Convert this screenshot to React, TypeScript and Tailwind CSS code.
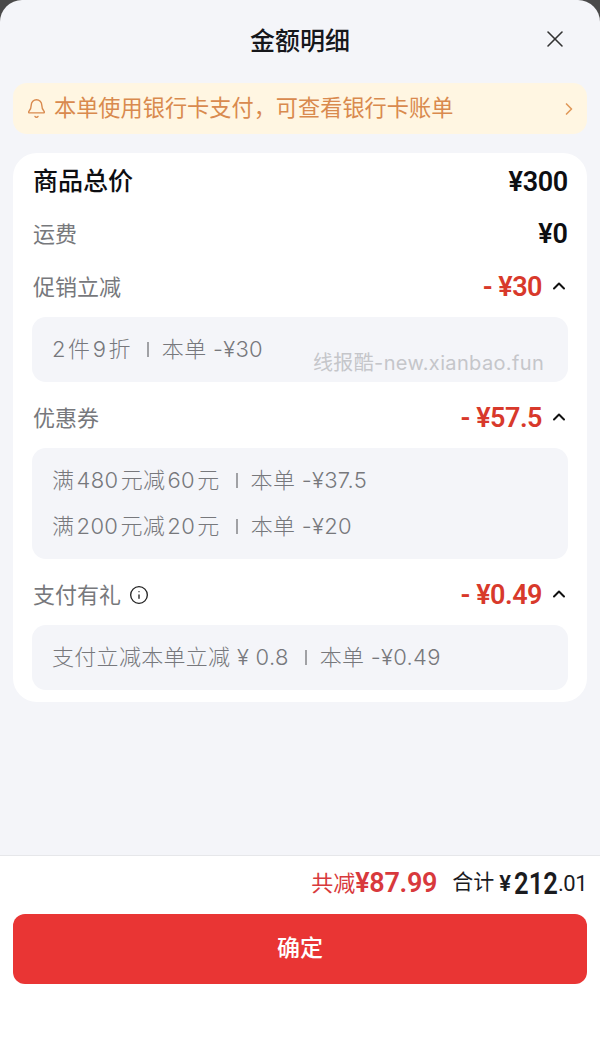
import React from 'react';
import { Bell, ChevronRight, ChevronUp, Info, X } from 'lucide-react';

const FONT = 'font-["Roboto","Noto_Sans_CJK_SC",sans-serif]';

function SectionRow({ label, amount, icon }: { label: string; amount: string; icon?: boolean }) {
  return (
    <div className="flex h-[36px] items-center justify-between">
      <div className="ml-[1px] flex items-center gap-[8px] text-[22px] text-[#77787c]">
        <span>{label}</span>
        {icon && <Info size={20} strokeWidth={1.6} className="text-[#222]" />}
      </div>
      <div className="flex items-center">
        <span className="text-[27px] font-semibold tracking-[-0.5px] text-[#d8392b]">{amount}</span>
        <ChevronUp size={20} strokeWidth={2.4} className="ml-[7px] mb-[3px] mr-[-1px] text-[#111]" />
      </div>
    </div>
  );
}

function DetailBox({ lines }: { lines: React.ReactNode[] }) {
  return (
    <div className='mt-[12px] flex flex-col gap-[9px] rounded-[14px] bg-[#f4f5f9] px-[20px] py-[14px] font-["Inter","Noto_Sans_CJK_SC",sans-serif] text-[22px] font-light tracking-[0.3px] text-[#77787c]'>
      {lines.map((line, i) => (
        <div key={i} className="flex h-[37px] items-center whitespace-pre">{line}</div>
      ))}
    </div>
  );
}

const Sep = () => <span className="ml-[16px] mr-[13px] h-[15px] w-[2px] bg-[#a0a1a5]" />;

export default function App() {
  return (
    <div className={`h-[1044px] w-[600px] overflow-hidden bg-[#4a4a4a] ${FONT}`}>
      <div className="flex h-full flex-col overflow-hidden rounded-t-[22px] bg-[#f4f5f9]">
        <header className="relative flex h-[83px] shrink-0 items-center justify-center">
          <h1 className="text-[25px] font-medium text-[#16171b]">金额明细</h1>
          <X size={28} strokeWidth={1.3} className="absolute right-[31px] top-[25px] text-[#333]" />
        </header>

        <div className="mx-[13px] flex h-[51px] shrink-0 items-center rounded-[14px] bg-[#fff6e2] pl-[13px] pr-[8px] text-[22.2px] text-[#d98a4e]">
          <Bell size={21} strokeWidth={1.6} />
          <span className="ml-[7px] flex-1">本单使用银行卡支付，可查看银行卡账单</span>
          <ChevronRight size={20} strokeWidth={2} className="text-[#e0995a]" />
        </div>

        <main className="relative mx-[13px] mt-[19px] shrink-0 rounded-[24px] bg-white px-[19px] pb-[12px] pt-[11px]">
          <div className="flex h-[36px] items-center justify-between text-[#0d0e12]">
            <span className="ml-[1px] text-[25px] font-medium">商品总价</span>
            <span className="text-[27px] font-semibold tracking-[-0.3px]">¥300</span>
          </div>
          <div className="mt-[16px] flex h-[36px] items-center justify-between">
            <span className="ml-[1px] text-[22px] text-[#77787c]">运费</span>
            <span className="text-[27px] font-semibold text-[#0d0e12]">¥0</span>
          </div>
          <div className="mt-[17px]">
            <SectionRow label="促销立减" amount="- ¥30" />
            <DetailBox lines={[<>2&#8202;件&#8202;9&#8202;折<Sep />本单 -¥30</>]} />
          </div>
          <div className="mt-[18px]">
            <SectionRow label="优惠券" amount="- ¥57.5" />
            <DetailBox
              lines={[
                <>满&#8202;480&#8202;元减&#8202;60&#8202;元<Sep />本单 -¥37.5</>,
                <>满&#8202;200&#8202;元减&#8202;20&#8202;元<Sep />本单 -¥20</>,
              ]}
            />
          </div>
          <div className="mt-[18px]">
            <SectionRow label="支付有礼" amount="- ¥0.49" icon />
            <DetailBox lines={[<>支付立减本单立减 ¥ 0.8<Sep />本单 -¥0.49</>]} />
          </div>
          <span className='absolute left-[300px] top-[195px] font-["Inter","Noto_Sans_CJK_SC",sans-serif] text-[20px] tracking-[0.36px] text-[#c5c6ca]'>线报酷-new.xianbao.fun</span>
        </main>

        <div className="flex-1" />

        <footer className="h-[189px] shrink-0 border-t border-[#e6e7ea] bg-white px-[13px]">
          <div className="flex h-[54px] items-center justify-end">
            <span className="text-[22px] text-[#d8393c]">共减</span>
            <span className="text-[27px] font-semibold tracking-[-0.3px] text-[#d8393c]">¥87.99</span>
            <span className="ml-[15px] text-[21px] text-[#1a1b1f]">合计</span>
            <span className="ml-[5px] text-[22px] font-semibold text-[#1a1b1f]">¥</span>
            <span className="ml-[3px] w-[44px] origin-left scale-x-[0.8] text-[32px] font-semibold text-[#1a1b1f]">212</span>
            <span className="text-[22px] tracking-[-0.5px] text-[#1a1b1f]">.01</span>
          </div>
          <button className="mt-[4px] flex h-[70px] w-full items-center justify-center rounded-[12px] bg-[#e93534] text-[23px] font-medium text-white">
            确定
          </button>
        </footer>
      </div>
    </div>
  );
}
